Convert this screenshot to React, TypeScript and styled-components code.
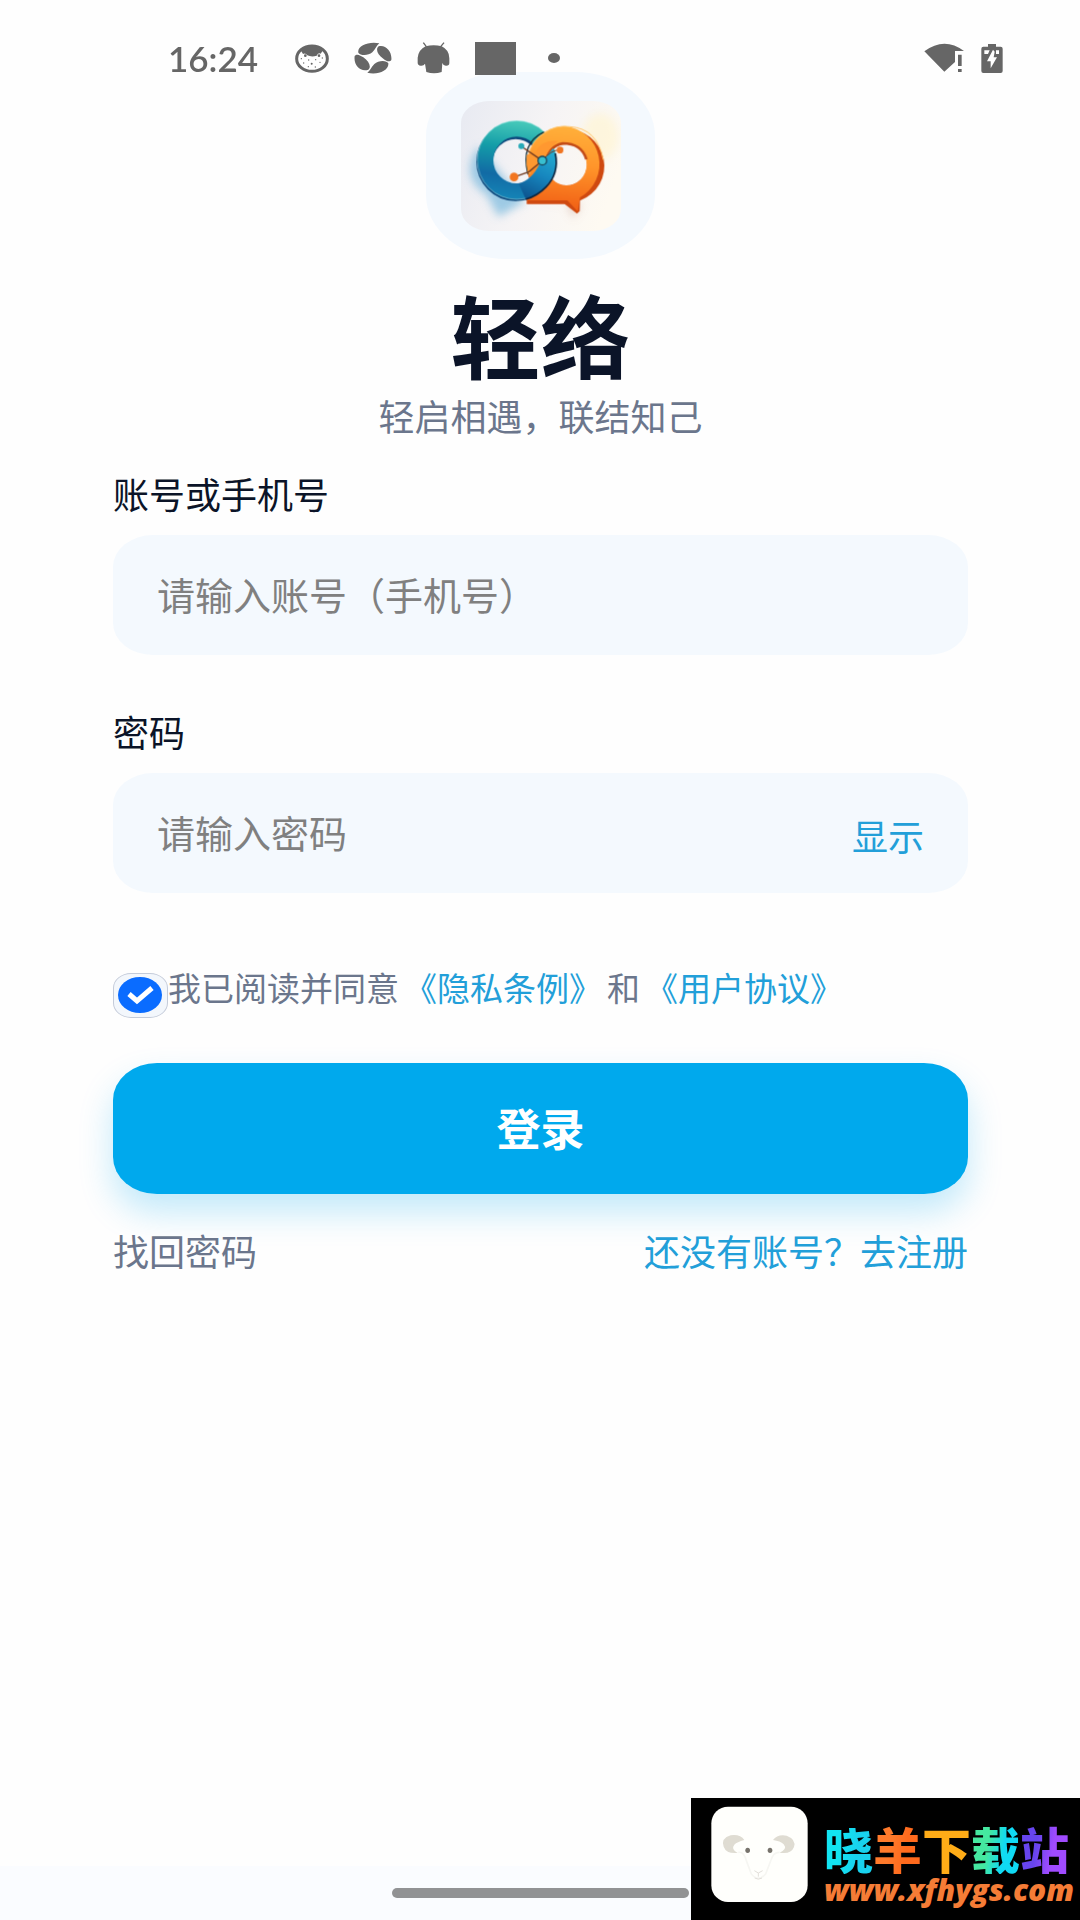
import React, { useState } from "react";
import styled, { createGlobalStyle } from "styled-components";

const ink = "#0b1428";
const muted = "#6b768c";
const brand = "#229fd9";
const field = "#f4f9fe";
const system = "#666666";

const GlobalStyle = createGlobalStyle`
  *, *::before, *::after { box-sizing: border-box; }
  body {
    margin: 0;
    background: #fefefe;
    font-family: "Noto Sans CJK SC", "Noto Sans", sans-serif;
  }
  button, input { font-family: inherit; }
`;

const Page = styled.div`
  position: relative;
  display: flex;
  flex-direction: column;
  min-height: 100vh;
`;

const StatusBar = styled.header`
  position: absolute;
  top: 0;
  left: 0;
  right: 0;
  display: flex;
  align-items: center;
  justify-content: space-between;
  height: 116px;
  padding: 0 77px 0 168px;
  color: ${system};
`;

const StatusGroup = styled.div<{ $gap: number }>`
  display: flex;
  align-items: center;
  gap: ${(p) => p.$gap}px;

  svg { display: block; }
`;

const Clock = styled.time`
  min-width: 90px;
  margin-right: 12px;
  font: 600 35px/40px Lato, sans-serif;
`;

const NotificationBlock = styled.span`
  width: 41px;
  height: 33px;
  background: ${system};
`;

const NotificationDot = styled.span`
  width: 12px;
  height: 10px;
  margin-left: 7px;
  border-radius: 50%;
  background: ${system};
`;

const Main = styled.main`
  flex: 1;
  display: flex;
  flex-direction: column;
  align-items: center;
  padding: 72px 112px 0 113px;
`;

const LogoCard = styled.div`
  display: grid;
  place-items: center;
  width: 229px;
  height: 187px;
  border-radius: 80px / 64px;
  background: ${field};
`;

const Title = styled.h1`
  margin: 28px 0 0;
  color: ${ink};
  font-size: 90px;
  font-weight: 700;
  line-height: 92px;
`;

const Subtitle = styled.p`
  margin: 14px 0 0;
  color: ${muted};
  font-size: 36px;
  font-weight: 400;
  line-height: 44px;
`;

const Form = styled.form`
  display: flex;
  flex-direction: column;
  width: 100%;
  margin-top: 34px;
`;

const Field = styled.div`
  display: flex;
  flex-direction: column;
  gap: 20px;
  margin-bottom: 54px;
`;

const FieldLabel = styled.label`
  align-self: flex-start;
  color: ${ink};
  font-size: 36px;
  font-weight: 400;
  line-height: 44px;
`;

const InputShell = styled.div`
  display: flex;
  align-items: center;
  gap: 20px;
  height: 120px;
  padding: 0 44px;
  border-radius: 40px / 32px;
  background: ${field};
`;

const TextInput = styled.input`
  flex: 1;
  min-width: 0;
  height: 100%;
  padding: 0 0 4px;
  border: 0;
  outline: 0;
  background: transparent;
  color: ${ink};
  font-size: 38px;
  font-weight: 400;

  &::placeholder { color: #808080; opacity: 1; }
`;

const TextButton = styled.button`
  padding: 4px 0 0;
  border: 0;
  background: none;
  color: ${brand};
  font-size: 36px;
  font-weight: 400;
  line-height: 44px;
  cursor: pointer;
`;

const Agreement = styled.div`
  display: flex;
  align-items: flex-start;
  flex-wrap: wrap;
  gap: 5px;
  margin-top: 18px;
  color: ${muted};
  font-size: 33px;
  font-weight: 400;
  line-height: 44px;
`;

const AgreementText = styled.label`
  margin-left: -5px;
`;

const CheckWrap = styled.span`
  display: grid;
  margin-top: 8px;

  > * { grid-area: 1 / 1; }
  svg { place-self: center; pointer-events: none; }
`;

const CheckInput = styled.input`
  appearance: none;
  width: 55px;
  height: 45px;
  margin: 0;
  border: 1px solid #c4cbd9;
  border-radius: 18px / 15px;
  background: #f3f7fc;
`;

const Link = styled.a<{ $quiet?: boolean }>`
  color: ${(p) => (p.$quiet ? muted : brand)};
  text-decoration: none;
`;

const SubmitButton = styled.button`
  height: 131px;
  margin-top: 45px;
  padding: 0 0 4px;
  border: 0;
  border-radius: 44px / 37px;
  background: #00a9ed;
  box-shadow: 0 18px 34px rgba(0, 169, 237, 0.24);
  color: #ffffff;
  font-size: 44px;
  font-weight: 700;
  cursor: pointer;
`;

const LinkRow = styled.nav`
  display: flex;
  justify-content: space-between;
  width: 100%;
  margin-top: 34px;
  font-size: 36px;
  font-weight: 400;
  line-height: 44px;
`;

const NavigationBar = styled.footer`
  display: flex;
  align-items: center;
  justify-content: center;
  height: 54px;
  background: #fafcff;
`;

const HomeIndicator = styled.span`
  width: 297px;
  height: 10px;
  border-radius: 5px;
  background: #919294;
`;

const SiteBadge = styled.aside`
  position: absolute;
  right: 0;
  bottom: 0;
  display: flex;
  gap: 16px;
  width: 389px;
  height: 122px;
  padding: 8px 0 0 20px;
  background: #000000;
`;

const SiteText = styled.div`
  display: flex;
  flex-direction: column;
  padding-top: 16px;
`;

const SiteName = styled.strong`
  display: flex;
  font-size: 49px;
  font-weight: 900;
  line-height: 52px;
`;

const SiteGlyph = styled.span<{ $from: string; $to: string }>`
  background: linear-gradient(100deg, ${(p) => p.$from} 35%, ${(p) => p.$to} 65%);
  background-clip: text;
  -webkit-background-clip: text;
  color: transparent;
`;

const SiteUrl = styled.span`
  color: #f57c36;
  font: italic 800 30px/32px "Open Sans", "Noto Sans", sans-serif;
`;

const FaceIcon = () => (
  <svg width="34" height="29" viewBox="466 71 102 87" aria-hidden="true">
    <ellipse cx="517" cy="115" rx="46" ry="38" fill="#fff" stroke={system} strokeWidth="9" />
    <path d="M484 91Q516 66 549 91L543 100Q536 96 531 106Q516 111 503 105Q497 96 490 101Z" fill={system} />
    <g fill={system}>
      <circle cx="497" cy="106" r="4" /><circle cx="538" cy="106" r="4" />
      <circle cx="485" cy="115" r="2" /><circle cx="492" cy="128" r="2" />
      <circle cx="507" cy="119" r="2" /><circle cx="516" cy="130" r="3" />
      <circle cx="528" cy="118" r="2" /><circle cx="541" cy="126" r="2" />
      <circle cx="548" cy="113" r="2" /><circle cx="506" cy="139" r="2" />
      <circle cx="527" cy="140" r="2" />
    </g>
  </svg>
);

const SwirlIcon = () => (
  <svg width="38" height="32" viewBox="643 67 114 96" fill={system} aria-hidden="true">
    <path d="M656 99C652 78 688 64 719 71C711 77 708 88 698 98C685 109 662 108 656 99Z" />
    <path d="M717 80C738 74 758 96 755 121C748 130 738 122 731 117C713 106 707 88 717 80Z" />
    <path d="M746 131C748 153 713 167 683 159C691 154 694 143 704 133C717 120 743 122 746 131Z" />
    <path d="M686 150C662 158 641 136 645 109C652 100 663 108 671 113C688 125 696 142 686 150Z" />
  </svg>
);

const RobotIcon = () => (
  <svg width="33" height="33" viewBox="833 67 99 99" fill={system} aria-hidden="true">
    <path d="M852 69L861 81M914 69L904 81" stroke={system} strokeWidth="4" />
    <path d="M859 80Q883 74 907 80Q930 91 930 116V130Q930 138 921 138Q912 139 909 130L907 157Q884 165 861 157L857 132Q853 139 844 138Q835 137 835 129V114Q838 90 859 80Z" />
  </svg>
);

const WifiIcon = () => (
  <svg width="40" height="30" viewBox="132 69 120 90" fill={system} aria-hidden="true">
    <path d="M133 94Q193 49 252 93H225V126L193 155Z" />
    <path d="M234 104H245V138H234ZM234 147H245V156H234Z" />
  </svg>
);

const BatteryIcon = () => (
  <svg width="22" height="29" viewBox="305 71 66 87" aria-hidden="true">
    <path d="M326 71H350V79H364Q370 79 370 85V152Q370 158 364 158H312Q306 158 306 152V85Q306 79 312 79H326Z" fill={system} />
    <path d="M315 90H331L326 101H315ZM350 90H359V101H350ZM341 88L323 123H334V144L353 111H343L346 94Z" fill="#fff" />
  </svg>
);

const AppLogo = () => (
  <svg width="160" height="130" viewBox="153 123 480 390" role="img" aria-label="轻络">
    <defs>
      <linearGradient id="tile" x1="0" y1="0.2" x2="1" y2="0.5">
        <stop offset="0" stopColor="#e9ebf2" /><stop offset="0.5" stopColor="#f6f4f5" /><stop offset="1" stopColor="#fefaf2" />
      </linearGradient>
      <linearGradient id="teal" gradientUnits="userSpaceOnUse" x1="330" y1="180" x2="300" y2="420">
        <stop offset="0" stopColor="#4accbb" /><stop offset="0.35" stopColor="#149da8" /><stop offset="0.7" stopColor="#126ba5" /><stop offset="1" stopColor="#1586b8" />
      </linearGradient>
      <linearGradient id="tealFront" gradientUnits="userSpaceOnUse" x1="420" y1="265" x2="350" y2="415">
        <stop offset="0" stopColor="#26afd2" /><stop offset="0.5" stopColor="#1787bf" /><stop offset="1" stopColor="#0d548f" />
      </linearGradient>
      <linearGradient id="orange" gradientUnits="userSpaceOnUse" x1="470" y1="195" x2="450" y2="440">
        <stop offset="0" stopColor="#ffb13b" /><stop offset="0.5" stopColor="#ff942a" /><stop offset="1" stopColor="#f26316" />
      </linearGradient>
      <clipPath id="tileShape"><rect x="153" y="123" width="480" height="390" rx="84" ry="66" /></clipPath>
      <filter id="soft" x="-30%" y="-30%" width="160%" height="160%"><feGaussianBlur stdDeviation="13" /></filter>
    </defs>
    <g clipPath="url(#tileShape)">
      <rect x="153" y="123" width="480" height="390" fill="url(#tile)" />
      <g filter="url(#soft)">
        <path d="M205 260Q145 350 230 405L265 470L345 425Z" fill="#6fb3dc" opacity="0.65" />
        <ellipse cx="570" cy="230" rx="55" ry="70" fill="#fff4cf" opacity="0.6" />
        <path d="M350 432H470L490 475L515 430Z" fill="#c89b89" opacity="0.4" />
      </g>
      <circle cx="317" cy="305" r="93" fill="none" stroke="#0b477c" strokeWidth="50" />
      <circle cx="320" cy="300" r="94" fill="none" stroke="url(#teal)" strokeWidth="48" />
      <circle cx="320" cy="300" r="118" fill="none" stroke="#b8eeee" strokeWidth="2" opacity="0.7" />
      <path fillRule="evenodd" d="M466 206A116 112 0 0 1 510 422L509 453L501 461L464 432H350V414L390 385Q351 367 350 318A116 112 0 0 1 466 206ZM469 252A62 62 0 1 0 469 376A62 62 0 1 0 469 252Z" fill="#cf4910" />
      <path fillRule="evenodd" d="M466 198A116 115 0 0 1 510 412L503 454L472 421H350V410L390 383Q351 363 350 313A116 115 0 0 1 466 198ZM470 252A60 62 0 1 0 470 376A60 62 0 1 0 470 252Z" fill="url(#orange)" />
      <path d="M407 311Q412 260 458 250Q515 250 529 298" fill="none" stroke="#c34b16" strokeWidth="8" />
      <path d="M354 343Q330 249 402 216" fill="none" stroke="#12303a" strokeWidth="4" />
      <path d="M360 341Q340 255 404 219Q434 194 480 200Q562 205 580 300" fill="none" stroke="#ffc46b" strokeWidth="3" />
      <path d="M430 264Q450 324 416 369Q390 407 347 417L326 370Q366 360 389 311Z" fill="url(#tealFront)" />
      <path d="M436 280Q448 340 408 381Q382 408 347 418" fill="none" stroke="#0b2540" strokeWidth="5" />
      <path d="M378 274Q394 238 444 243Q425 255 408 286L397 302L369 326L354 342Q347 313 350 285Z" fill="#ff9830" />
      <path d="M334 259L397 302M397 302L357 335L313 351" fill="none" stroke="#71391f" strokeWidth="4" />
      <path d="M397 302Q424 268 450 270" fill="none" stroke="#71391f" strokeWidth="3" />
      <circle cx="334" cy="258" r="9" fill="#27a9b7" />
      <circle cx="450" cy="270" r="10" fill="#f07522" />
      <circle cx="312" cy="351" r="13" fill="#f27620" />
      <circle cx="397" cy="302" r="13" fill="#39bfd0" stroke="#17455c" strokeWidth="4" />
    </g>
  </svg>
);

const CheckIcon = () => (
  <svg width="45" height="37" viewBox="0 0 45 37" aria-hidden="true">
    <ellipse cx="22" cy="18" rx="22" ry="18" fill="#0a6cff" />
    <path d="M11 17L19 24L34 11" fill="none" stroke="#fff" strokeWidth="5" />
  </svg>
);

const SheepIcon = () => (
  <svg width="97" height="96" viewBox="92 76 291 288" aria-hidden="true">
    <rect x="93" y="78" width="289" height="286" rx="50" fill="#fffffc" />
    <path d="M192 178Q180 160 151 164Q121 173 130 198Q138 220 172 217Q151 205 162 192Q170 184 192 178Z" fill="#dfdcd2" />
    <path d="M278 178Q291 160 319 165Q348 176 341 199Q332 222 298 216Q322 205 310 191Q300 181 278 178Z" fill="#dfdcd2" />
    <path d="M174 215Q191 212 198 240L213 280Q234 305 256 280L272 238Q279 214 298 215" fill="none" stroke="#f6f6f2" strokeWidth="5" />
    <ellipse cx="202" cy="209" rx="7" ry="8" fill="#77736c" />
    <ellipse cx="269" cy="209" rx="7" ry="8" fill="#77736c" />
    <path d="M222 270L234 277L247 270M234 277V288M223 292Q234 299 245 292" fill="none" stroke="#e2dfda" strokeWidth="3" />
  </svg>
);

const siteGlyphs = [
  { char: "晓", from: "#12e4f2", to: "#18d2ee" },
  { char: "羊", from: "#ff7a2b", to: "#ff6a1d" },
  { char: "下", from: "#ffac17", to: "#ffac17" },
  { char: "载", from: "#45e8a0", to: "#10daf4" },
  { char: "站", from: "#6745ee", to: "#a04bff" },
];

export default function App() {
  const [revealed, setRevealed] = useState(false);
  const [agreed, setAgreed] = useState(true);

  return (
    <>
      <GlobalStyle />
      <Page>
        <Main>
          <LogoCard><AppLogo /></LogoCard>
          <Title>轻络</Title>
          <Subtitle>轻启相遇，联结知己</Subtitle>
          <Form onSubmit={(event) => event.preventDefault()}>
            <Field>
              <FieldLabel htmlFor="account">账号或手机号</FieldLabel>
              <InputShell>
                <TextInput id="account" type="text" placeholder="请输入账号（手机号）" />
              </InputShell>
            </Field>
            <Field>
              <FieldLabel htmlFor="password">密码</FieldLabel>
              <InputShell>
                <TextInput id="password" type={revealed ? "text" : "password"} placeholder="请输入密码" />
                <TextButton type="button" onClick={() => setRevealed(!revealed)}>显示</TextButton>
              </InputShell>
            </Field>
            <Agreement>
              <CheckWrap>
                <CheckInput id="agree" type="checkbox" checked={agreed} onChange={() => setAgreed(!agreed)} />
                {agreed && <CheckIcon />}
              </CheckWrap>
              <AgreementText htmlFor="agree">我已阅读并同意</AgreementText>
              <Link href="#privacy">《隐私条例》</Link>
              <span>和</span>
              <Link href="#terms">《用户协议》</Link>
            </Agreement>
            <SubmitButton type="submit">登录</SubmitButton>
          </Form>
          <LinkRow>
            <Link href="#recover" $quiet>找回密码</Link>
            <Link href="#register">还没有账号？去注册</Link>
          </LinkRow>
        </Main>
        <NavigationBar><HomeIndicator /></NavigationBar>
        <StatusBar>
          <StatusGroup $gap={25}>
            <Clock>16:24</Clock>
            <FaceIcon />
            <SwirlIcon />
            <RobotIcon />
            <NotificationBlock />
            <NotificationDot />
          </StatusGroup>
          <StatusGroup $gap={17}>
            <WifiIcon />
            <BatteryIcon />
          </StatusGroup>
        </StatusBar>
        <SiteBadge>
          <SheepIcon />
          <SiteText>
            <SiteName>
              {siteGlyphs.map((g) => (
                <SiteGlyph key={g.char} $from={g.from} $to={g.to}>{g.char}</SiteGlyph>
              ))}
            </SiteName>
            <SiteUrl>www.xfhygs.com</SiteUrl>
          </SiteText>
        </SiteBadge>
      </Page>
    </>
  );
}
